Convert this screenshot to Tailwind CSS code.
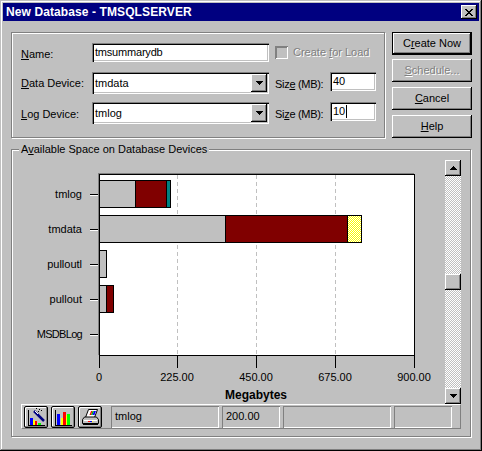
<!DOCTYPE html>
<html lang="en">
<head>
  <meta charset="UTF-8" />
  <title>New Database - TMSQLSERVER</title>
  <script src="https://cdn.jsdelivr.net/npm/@tailwindcss/browser@4"></script>
</head>
<body class="m-0 bg-[#c0c0c0]">

<div class="w-[482px] h-[451px] overflow-hidden bg-[#c0c0c0] p-[3px] text-black text-[11px] leading-none whitespace-nowrap font-['Liberation_Sans',Arial,sans-serif] shadow-[inset_-1px_-1px_0_#000,inset_1px_1px_0_#c0c0c0,inset_-2px_-2px_0_#808080,inset_2px_2px_0_#fff]">

  <!-- Title bar -->
  <div class="h-[18px] bg-[#000080] flex items-center justify-between pl-[3px] pr-[2px]">
    <span class="text-white font-bold text-[12px] tracking-[0.1px]">New Database - TMSQLSERVER</span>
    <button class="w-[16px] h-[14px] bg-[#c0c0c0] flex items-center justify-center shadow-[inset_-1px_-1px_0_#000,inset_1px_1px_0_#fff,inset_-2px_-2px_0_#808080]">
      <svg width="8" height="7" viewBox="0 0 8 7" shape-rendering="crispEdges"><path d="M0 0h2v1h1v1h2V1h1V0h2v1H7v1H6v1H5v1h1v1h1v1h1v1H6V6H5V5H3v1H2v1H0V6h1V5h1V4h1V3H2V2H1V1H0z" fill="#000"/></svg>
    </button>
  </div>

  <!-- Form row -->
  <div class="flex items-start gap-[7px] mt-[11px] ml-[8px]">
    <div class="w-[374px] h-[106px] border border-[#808080] shadow-[1px_1px_0_#fff,inset_1px_1px_0_#fff] pt-[10px] pl-[9px] flex flex-col">
      <div class="flex items-center h-[19px]">
        <label class="w-[71px] pt-[4px]"><u>N</u>ame:</label>
        <div class="w-[177px] h-[19px] bg-white flex items-center pl-[3px] tracking-[-0.2px] shadow-[inset_1px_1px_0_#808080,inset_2px_2px_0_#000,inset_-1px_-1px_0_#fff,inset_-2px_-2px_0_#c0c0c0]">tmsummarydb</div>
        <div class="ml-[6px] w-[13px] h-[13px] shadow-[inset_1px_1px_0_#808080,inset_-1px_-1px_0_#fff,inset_2px_2px_0_#808080]"></div>
        <span class="ml-[5px] text-[#808080] [text-shadow:1px_1px_0_#fff]">Create <u>f</u>or Load</span>
      </div>
      <div class="flex items-center h-[22px] mt-[10px]">
        <label class="w-[71px]"><u>D</u>ata Device:</label>
        <div class="w-[177px] h-[22px] bg-white flex items-center justify-between pl-[3px] pr-[2px] shadow-[inset_1px_1px_0_#808080,inset_2px_2px_0_#000,inset_-1px_-1px_0_#fff,inset_-2px_-2px_0_#c0c0c0]">
          tmdata
          <span class="w-[16px] h-[18px] bg-[#c0c0c0] flex items-center justify-center shadow-[inset_-1px_-1px_0_#000,inset_1px_1px_0_#fff,inset_-2px_-2px_0_#808080]">
            <svg width="7" height="4" viewBox="0 0 7 4" shape-rendering="crispEdges"><path d="M0 0h7v1H6v1H5v1H4v1H3V3H2V2H1V1H0z" fill="#000"/></svg>
          </span>
        </div>
        <label class="ml-[6px] w-[55px] pt-[3px] tracking-[-0.3px]">Siz<u>e</u> (MB):</label>
        <div class="w-[46px] h-[19px] self-start bg-white flex items-center pl-[3px] shadow-[inset_1px_1px_0_#808080,inset_2px_2px_0_#000,inset_-1px_-1px_0_#fff,inset_-2px_-2px_0_#c0c0c0]">40</div>
      </div>
      <div class="flex items-center h-[22px] mt-[8px]">
        <label class="w-[71px] pt-[2px]"><u>L</u>og Device:</label>
        <div class="w-[177px] h-[22px] bg-white flex items-center justify-between pl-[3px] pr-[2px] shadow-[inset_1px_1px_0_#808080,inset_2px_2px_0_#000,inset_-1px_-1px_0_#fff,inset_-2px_-2px_0_#c0c0c0]">
          tmlog
          <span class="w-[16px] h-[18px] bg-[#c0c0c0] flex items-center justify-center shadow-[inset_-1px_-1px_0_#000,inset_1px_1px_0_#fff,inset_-2px_-2px_0_#808080]">
            <svg width="7" height="4" viewBox="0 0 7 4" shape-rendering="crispEdges"><path d="M0 0h7v1H6v1H5v1H4v1H3V3H2V2H1V1H0z" fill="#000"/></svg>
          </span>
        </div>
        <label class="ml-[6px] w-[55px] pt-[2px] tracking-[-0.3px]">Si<u>z</u>e (MB):</label>
        <div class="w-[46px] h-[19px] self-start bg-white flex items-center pl-[3px] shadow-[inset_1px_1px_0_#808080,inset_2px_2px_0_#000,inset_-1px_-1px_0_#fff,inset_-2px_-2px_0_#c0c0c0]">10<span class="w-px h-[13px] bg-black ml-px"></span></div>
      </div>
    </div>

    <!-- Buttons -->
    <div class="w-[80px] flex flex-col">
      <button class="h-[23px] border border-black flex items-center justify-center bg-[#c0c0c0] shadow-[inset_-1px_-1px_0_#000,inset_1px_1px_0_#fff,inset_-2px_-2px_0_#808080]">C<u>r</u>eate Now</button>
      <button class="h-[23px] mt-[4px] flex items-center justify-center bg-[#c0c0c0] text-[#808080] [text-shadow:1px_1px_0_#fff] shadow-[inset_-1px_-1px_0_#000,inset_1px_1px_0_#fff,inset_-2px_-2px_0_#808080]"><u>S</u>chedule...</button>
      <button class="h-[23px] mt-[5px] flex items-center justify-center bg-[#c0c0c0] shadow-[inset_-1px_-1px_0_#000,inset_1px_1px_0_#fff,inset_-2px_-2px_0_#808080]"><u>C</u>ancel</button>
      <button class="h-[23px] mt-[5px] flex items-center justify-center bg-[#c0c0c0] shadow-[inset_-1px_-1px_0_#000,inset_1px_1px_0_#fff,inset_-2px_-2px_0_#808080]"><u>H</u>elp</button>
    </div>
  </div>

  <!-- Available space group -->
  <div class="relative w-[460px] h-[288px] mt-[11px] ml-[8px] border border-[#808080] shadow-[1px_1px_0_#fff,inset_1px_1px_0_#fff] pt-[10px]">
    <span class="absolute left-[7px] -top-[6px] px-[2px] bg-[#c0c0c0]">A<u>v</u>ailable Space on Database Devices</span>

    <div class="flex h-[244px]">
      <!-- Chart -->
      <div class="w-[433px] pl-[87px] pt-[14px]">
        <div class="relative w-[316px] h-[182px] bg-white border border-black shadow-[-1px_-1px_0_#808080]">
          <!-- grid lines -->
          <div class="absolute left-[77px] top-0 bottom-0 w-px bg-[image:repeating-linear-gradient(to_bottom,#c0c0c0_0_4px,transparent_4px_7px)]"></div>
          <div class="absolute left-[156px] top-0 bottom-0 w-px bg-[image:repeating-linear-gradient(to_bottom,#c0c0c0_0_4px,transparent_4px_7px)]"></div>
          <div class="absolute left-[235px] top-0 bottom-0 w-px bg-[image:repeating-linear-gradient(to_bottom,#c0c0c0_0_4px,transparent_4px_7px)]"></div>

          <!-- bars -->
          <div class="relative flex flex-col gap-[7px] pt-[5px] -ml-px">
            <div class="relative flex h-[28px]">
              <span class="absolute right-full top-[9px] mr-[17px]">tmlog</span>
              <span class="absolute -left-[9px] top-[14px] w-[8px] h-px bg-black shadow-[0_1px_0_#fff]"></span>
              <div class="w-[37px] bg-[#c0c0c0] border border-black"></div>
              <div class="w-[32px] -ml-px bg-[#800000] border border-black"></div>
              <div class="w-[5px] -ml-px bg-[#008080] border border-black"></div>
            </div>
            <div class="relative flex h-[28px]">
              <span class="absolute right-full top-[9px] mr-[17px]">tmdata</span>
              <span class="absolute -left-[9px] top-[14px] w-[8px] h-px bg-black shadow-[0_1px_0_#fff]"></span>
              <div class="w-[127px] bg-[#c0c0c0] border border-black"></div>
              <div class="w-[123px] -ml-px bg-[#800000] border border-black"></div>
              <div class="w-[15px] -ml-px border border-black bg-[image:repeating-conic-gradient(#ffff00_0%_25%,#fff_0%_50%)] bg-size-[2px_2px]"></div>
            </div>
            <div class="relative flex h-[28px]">
              <span class="absolute right-full top-[9px] mr-[17px]">pulloutl</span>
              <span class="absolute -left-[9px] top-[14px] w-[8px] h-px bg-black shadow-[0_1px_0_#fff]"></span>
              <div class="w-[8px] bg-[#c0c0c0] border border-black"></div>
            </div>
            <div class="relative flex h-[28px]">
              <span class="absolute right-full top-[9px] mr-[17px]">pullout</span>
              <span class="absolute -left-[9px] top-[14px] w-[8px] h-px bg-black shadow-[0_1px_0_#fff]"></span>
              <div class="w-[8px] bg-[#c0c0c0] border border-black"></div>
              <div class="w-[8px] -ml-px bg-[#800000] border border-black"></div>
            </div>
            <div class="relative flex h-[28px]">
              <span class="absolute right-full top-[9px] mr-[17px] tracking-[-0.7px]">MSDBLog</span>
              <span class="absolute -left-[9px] top-[14px] w-[8px] h-px bg-black shadow-[0_1px_0_#fff]"></span>
            </div>
          </div>

          <!-- x axis ticks and labels -->
          <span class="absolute -left-px top-full w-px h-[13px] bg-black"></span>
          <span class="absolute left-[77px] top-full w-px h-[13px] bg-black"></span>
          <span class="absolute left-[156px] top-full w-px h-[13px] bg-black"></span>
          <span class="absolute left-[235px] top-full w-px h-[13px] bg-black"></span>
          <span class="absolute left-[314px] top-full w-px h-[13px] bg-black"></span>
          <span class="absolute -left-[21px] top-[197px] w-[40px] text-center">0</span>
          <span class="absolute left-[57px] top-[197px] w-[40px] text-center">225.00</span>
          <span class="absolute left-[136px] top-[197px] w-[40px] text-center">450.00</span>
          <span class="absolute left-[215px] top-[197px] w-[40px] text-center">675.00</span>
          <span class="absolute left-[294px] top-[197px] w-[40px] text-center">900.00</span>
          <span class="absolute left-[116px] top-[214px] w-[80px] text-center font-bold text-[12px]">Megabytes</span>
        </div>
      </div>

      <!-- Scrollbar -->
      <div class="w-[16px] flex flex-col bg-[image:repeating-conic-gradient(#fff_0%_25%,#c0c0c0_0%_50%)] bg-size-[2px_2px]">
        <div class="h-[16px] bg-[#c0c0c0] flex items-center justify-center shadow-[inset_-1px_-1px_0_#000,inset_1px_1px_0_#fff,inset_-2px_-2px_0_#808080]">
          <svg width="7" height="4" viewBox="0 0 7 4" shape-rendering="crispEdges"><path d="M3 0h1v1h1v1h1v1h1v1H0V3h1V2h1V1h1z" fill="#000"/></svg>
        </div>
        <div class="h-[16px] mt-[98px] bg-[#c0c0c0] shadow-[inset_-1px_-1px_0_#000,inset_1px_1px_0_#fff,inset_-2px_-2px_0_#808080]"></div>
        <div class="h-[16px] mt-auto bg-[#c0c0c0] flex items-center justify-center shadow-[inset_-1px_-1px_0_#000,inset_1px_1px_0_#fff,inset_-2px_-2px_0_#808080]">
          <svg width="7" height="4" viewBox="0 0 7 4" shape-rendering="crispEdges"><path d="M0 0h7v1H6v1H5v1H4v1H3V3H2V2H1V1H0z" fill="#000"/></svg>
        </div>
      </div>
    </div>

    <!-- Toolbar -->
    <div class="ml-[9px] w-[440px] h-[25px] flex items-center pl-[2px] border-t border-l border-white border-r border-b border-r-[#808080] border-b-[#808080]">
      <button class="w-[24px] h-[22px] bg-[#c0c0c0] flex items-center justify-center border border-black rounded-[2px] shadow-[inset_-1px_-1px_0_#808080,inset_1px_1px_0_#fff]">
        <svg width="18" height="18" viewBox="0 0 18 18" shape-rendering="crispEdges">
          <path d="M1.500 2v15.500h16" fill="none" stroke="#000"/>
          <rect x="3" y="10" width="3" height="7" fill="#0000ff"/>
          <rect x="6" y="12" width="2" height="5" fill="#ffff00"/>
          <rect x="8" y="13" width="2" height="4" fill="#ff0000"/>
          <rect x="11" y="15" width="3" height="2" fill="#00ff00"/>
          <path d="M7 3l10 10" stroke="#000080" stroke-width="2.500" shape-rendering="auto"/>
          <path d="M8 3l3 3" stroke="#fff" shape-rendering="auto"/>
          <path d="M9 0h1M12 1h1M14 2h1M11 3h1" stroke="#000"/>
        </svg>
      </button>
      <button class="w-[24px] h-[22px] ml-[3px] bg-[#c0c0c0] flex items-center justify-center border border-black rounded-[2px] shadow-[inset_-1px_-1px_0_#808080,inset_1px_1px_0_#fff]">
        <svg width="18" height="18" viewBox="0 0 18 18" shape-rendering="crispEdges">
          <path d="M1.500 2v15.500h16" fill="none" stroke="#000"/>
          <rect x="3" y="6" width="3" height="11" fill="#0000ff"/>
          <rect x="7" y="10" width="2" height="7" fill="#ffff00"/>
          <rect x="9" y="4" width="3" height="13" fill="#ff0000"/>
          <rect x="12" y="7" width="1" height="10" fill="#ffff00"/>
          <rect x="13" y="6" width="3" height="11" fill="#00ff00"/>
        </svg>
      </button>
      <button class="w-[24px] h-[22px] ml-[3px] bg-[#c0c0c0] flex items-center justify-center border border-black rounded-[2px] shadow-[inset_-1px_-1px_0_#808080,inset_1px_1px_0_#fff]">
        <svg width="18" height="18" viewBox="0 0 18 18">
          <path d="M7.500 1.500h9l-3 8h-9z" fill="#fff" stroke="#000" />
          <path d="M8.500 7l1.500-4h1.500L10 7z" fill="#ff0000"/>
          <path d="M10 7l1.500-4H13l-1.500 4z" fill="#00c000"/>
          <path d="M11.500 7L13 3h2l-1.500 4z" fill="#0000ff"/>
          <path d="M1.500 11.500l2-2.500h12l2 2.500v4h-16z" fill="#c0c0c0" stroke="#000"/>
          <path d="M3 12.500h13" stroke="#fff"/>
          <path d="M2 16.500h15" stroke="#000"/>
          <rect x="7" y="13" width="2" height="1" fill="#ff0000"/>
          <rect x="9" y="13" width="2" height="1" fill="#0000ff"/>
          <rect x="11" y="13" width="1" height="1" fill="#ffff00"/>
        </svg>
      </button>
      <div class="w-[108px] h-[22px] ml-[9px] flex items-center pl-[4px] shadow-[inset_1px_1px_0_#808080,inset_-1px_-1px_0_#fff]">tmlog</div>
      <div class="w-[58px] h-[22px] ml-[3px] flex items-center pl-[4px] shadow-[inset_1px_1px_0_#808080,inset_-1px_-1px_0_#fff]">200.00</div>
      <div class="w-[108px] h-[22px] ml-[3px] shadow-[inset_1px_1px_0_#808080,inset_-1px_-1px_0_#fff]"></div>
      <div class="w-[58px] h-[22px] ml-[3px] shadow-[inset_1px_1px_0_#808080,inset_-1px_-1px_0_#fff]"></div>
    </div>
  </div>
</div>

</body>
</html>
